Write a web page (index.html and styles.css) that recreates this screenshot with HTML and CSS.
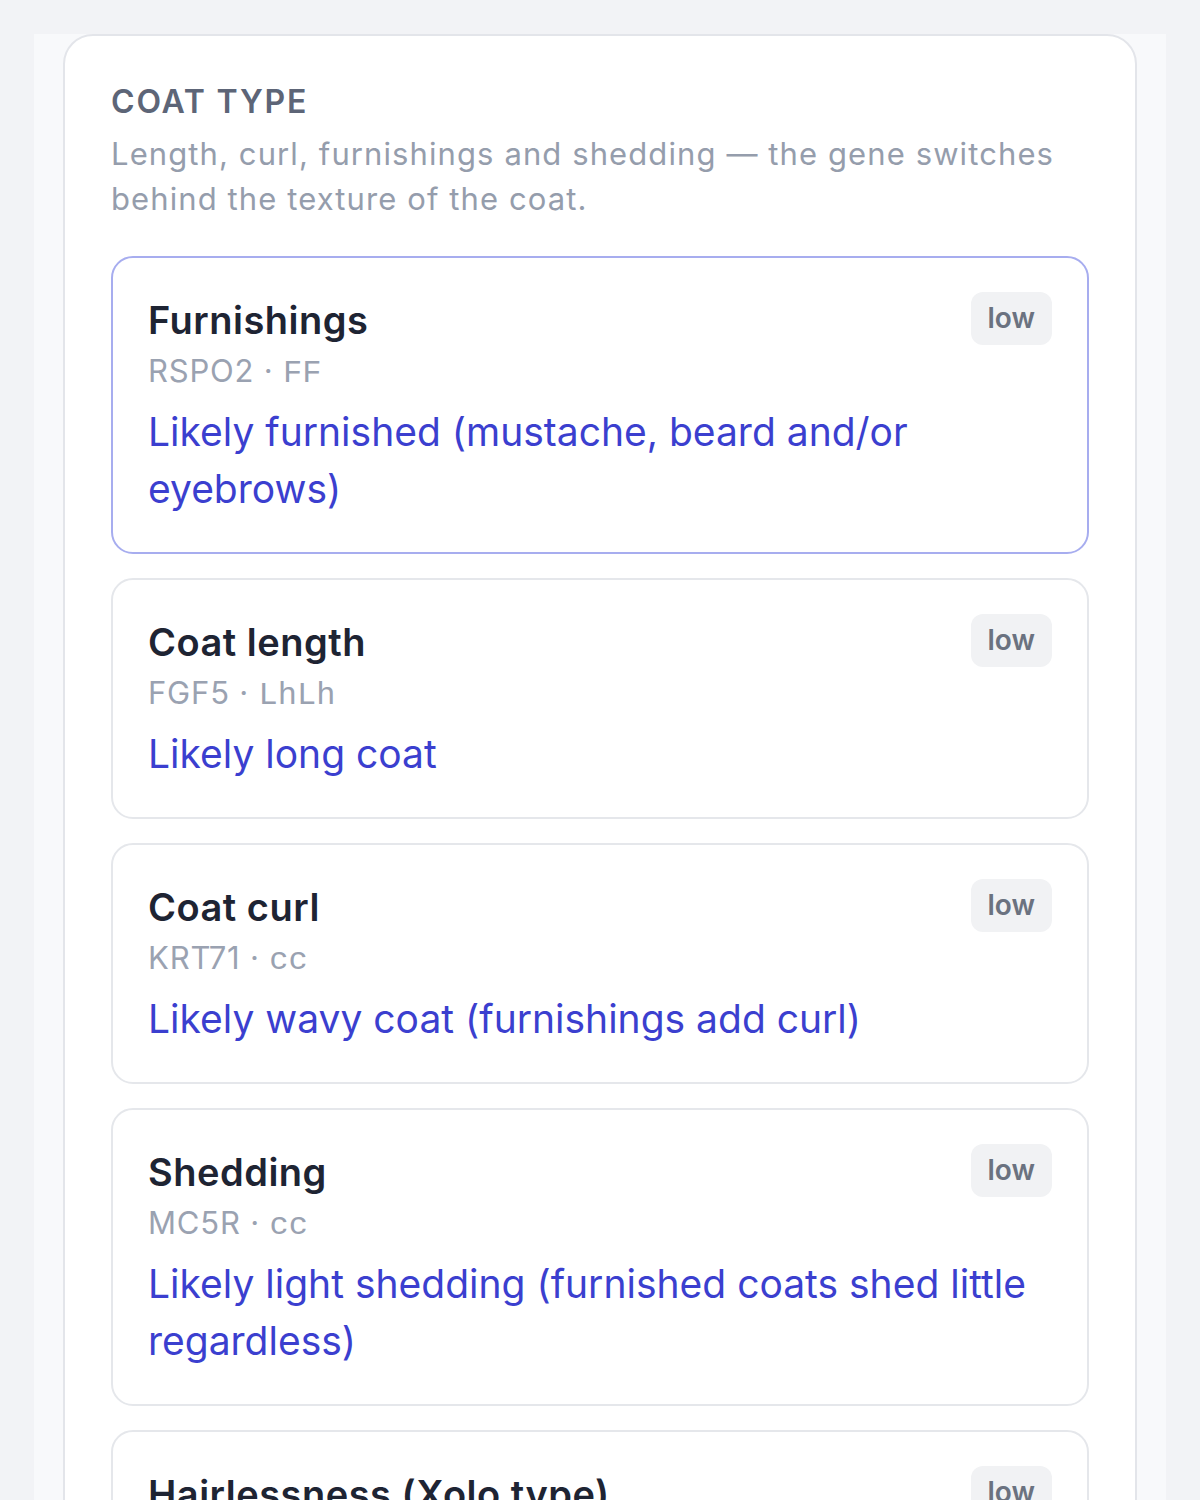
FILE: index.html
```html
<!DOCTYPE html>
<html lang="en">
<head>
  <meta charset="UTF-8" />
  <meta name="viewport" content="width=device-width, initial-scale=1.0"/>
  <title>Coat Type</title>
  <link rel="stylesheet" href="styles.css">
</head>
<body>
  <div class="panel">
    <section class="card">
      <h2 class="card-title">Coat Type</h2>
      <p class="card-desc">Length, curl, furnishings and shedding — the gene switches behind the texture of the coat.</p>

      <div class="traits">
        <div class="trait active">
          <div class="trait-head">
            <div>
              <h3>Furnishings</h3>
              <div class="gene">RSPO2 · <code>FF</code></div>
            </div>
            <span class="badge">low</span>
          </div>
          <p class="result">Likely furnished (mustache, beard and/or eyebrows)</p>
        </div>

        <div class="trait">
          <div class="trait-head">
            <div>
              <h3>Coat length</h3>
              <div class="gene">FGF5 · <code>LhLh</code></div>
            </div>
            <span class="badge">low</span>
          </div>
          <p class="result">Likely long coat</p>
        </div>

        <div class="trait">
          <div class="trait-head">
            <div>
              <h3>Coat curl</h3>
              <div class="gene">KRT71 · <code>cc</code></div>
            </div>
            <span class="badge">low</span>
          </div>
          <p class="result">Likely wavy coat (furnishings add curl)</p>
        </div>

        <div class="trait">
          <div class="trait-head">
            <div>
              <h3>Shedding</h3>
              <div class="gene">MC5R · <code>cc</code></div>
            </div>
            <span class="badge">low</span>
          </div>
          <p class="result">Likely light shedding (furnished coats shed little regardless)</p>
        </div>

        <div class="trait">
          <div class="trait-head">
            <div>
              <h3>Hairlessness (Xolo type)</h3>
              <div class="gene">FOXI3 · <code>hh</code></div>
            </div>
            <span class="badge">low</span>
          </div>
          <p class="result">Likely coated</p>
        </div>
      </div>
    </section>
  </div>
</body>
</html>
```

FILE: styles.css
```css
* {
  box-sizing: border-box;
  margin: 0;
  padding: 0;
}

body {
  background-color: #f2f3f6;
  font-family: 'Inter', 'Noto Sans', sans-serif;
  color: #1f2937;
  padding: 34px 34px 0;
}

.panel {
  background: #f8f9fb;
  padding: 0 29px;
  min-height: 1500px;
}

.card {
  background: #ffffff;
  border: 2px solid #e3e5ea;
  border-radius: 30px;
  padding: 46px;
}

.card-title {
  font-size: 32px;
  line-height: 40px;
  font-weight: 600;
  letter-spacing: 1.8px;
  text-transform: uppercase;
  color: #5d6577;
}

.card-desc {
  margin-top: 9px;
  font-size: 31px;
  line-height: 45px;
  letter-spacing: 1.1px;
  color: #959dac;
}

.traits {
  margin-top: 35px;
  display: flex;
  flex-direction: column;
  gap: 24px;
}

.trait {
  border: 2px solid #e5e7eb;
  border-radius: 22px;
  padding: 38px 35px 35px;
  background: #fff;
}

.trait.active {
  border-color: #a7adef;
}

.trait-head {
  display: flex;
  justify-content: space-between;
  align-items: flex-start;
  gap: 20px;
}

.trait h3 {
  font-size: 38px;
  line-height: 49px;
  font-weight: 600;
  letter-spacing: 0.5px;
  color: #1e2433;
}

.gene {
  margin-top: 3px;
  font-size: 31px;
  line-height: 45px;
  letter-spacing: 0.8px;
  color: #9aa2b1;
}

.gene code {
  font-family: 'Liberation Mono', 'DejaVu Sans Mono', monospace;
  font-size: 32px;
  line-height: 1;
  letter-spacing: 0;
}

.badge {
  margin-top: -4px;
  background: #f1f2f4;
  color: #6b7280;
  font-size: 28px;
  font-weight: 600;
  line-height: 33px;
  padding: 10px 17px;
  border-radius: 12px;
  flex-shrink: 0;
}

.result {
  margin-top: 10px;
  font-size: 39px;
  line-height: 57px;
  color: #3b3fcf;
}
```
